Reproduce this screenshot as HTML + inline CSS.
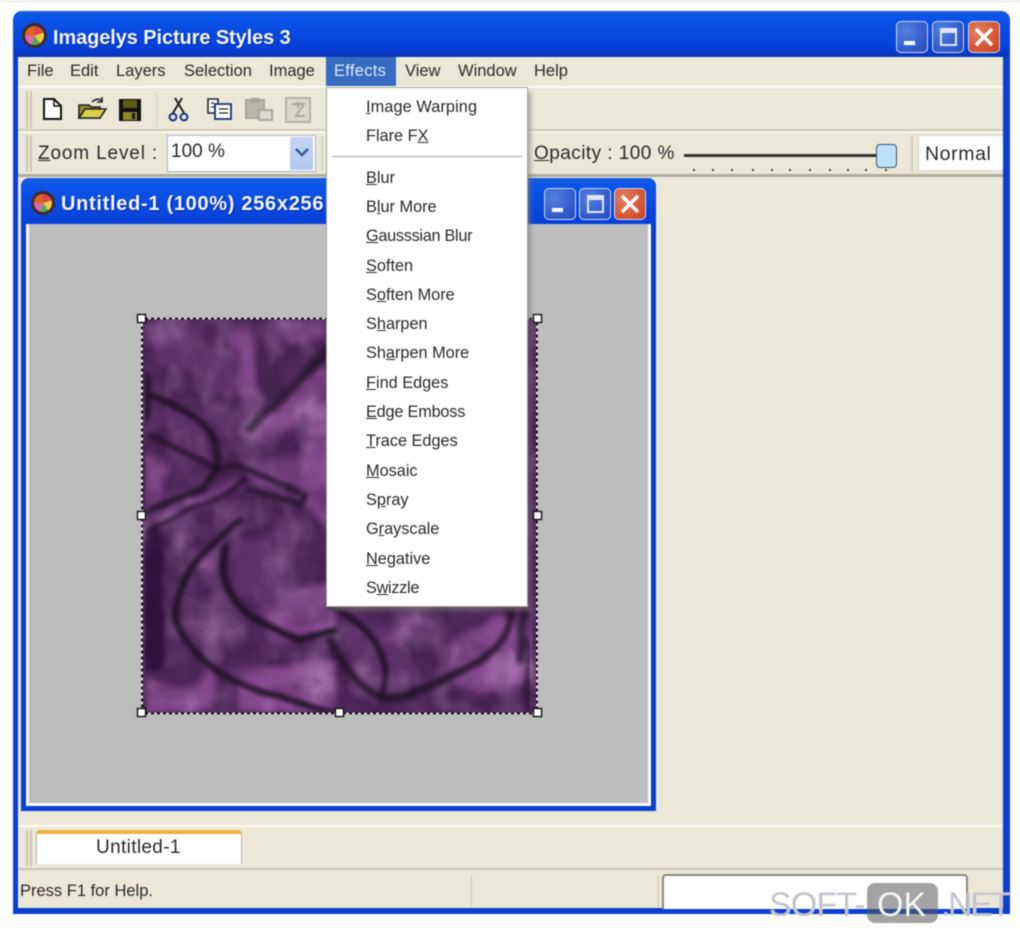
<!DOCTYPE html>
<html><head><meta charset="utf-8"><title>Imagelys Picture Styles 3</title>
<style>
html,body{margin:0;padding:0;background:#fff}
#p{position:relative;width:1020px;height:929px;overflow:hidden;background:#fdfdfb;font-family:"Liberation Sans",sans-serif;color:#2a2a2a;filter:blur(.45px)}
#p div,#p span.t{position:absolute}
.t{white-space:nowrap;font-size:16.5px;line-height:20px}
.b{box-sizing:border-box}
.tb{font-weight:bold;color:#f2f6ff;font-size:20px;line-height:24px;text-shadow:1px 1px 1px #0a2a9a}
.btn{box-sizing:border-box;width:32px;height:32px;border:1px solid #cfdcf8;border-radius:5px;background:radial-gradient(circle at 30% 30%,#5480e0,#2c55c8 75%,#2a4cb0)}
.red{background:radial-gradient(circle at 30% 30%,#e08060,#d5512e 70%,#c0421f)}
.ico{box-sizing:border-box;border-radius:50%;background:conic-gradient(#d44 0 20%,#ec4 20% 40%,#5a5 40% 55%,#d6a 55% 75%,#d62 75% 100%);border:3px solid #3a2a30}
.m{font-size:16.3px;line-height:20px;left:366px;white-space:nowrap}
</style></head><body><div id="p">

<div style="left:0;top:0;width:1020px;height:2px;background:#eee"></div>
<div class="b" style="left:13px;top:11px;width:997px;height:903px;border-radius:9px 9px 0 0;background:#0a3fd0"></div>
<div style="left:13px;top:11px;width:997px;height:46px;border-radius:9px 9px 0 0;background:linear-gradient(#1a5ce0 0,#0a55e8 12%,#0a4ae0 45%,#0540d8 80%,#0a36b8 100%)"></div>
<div style="left:18px;top:57px;width:985px;height:851px;background:#ebe8d8"></div>

<div class="ico" style="left:22px;top:23px;width:25px;height:25px"></div>
<span class="t tb" style="left:53px;top:26px;letter-spacing:-.1px">Imagelys Picture Styles 3</span>
<div class="btn" style="left:896px;top:21px"><div style="left:7px;top:19px;width:11px;height:4px;background:#fff"></div></div>
<div class="btn" style="left:932px;top:21px"><div class="b" style="left:7px;top:6px;width:17px;height:18px;border:2px solid #dfe8fb;border-top-width:5px"></div></div>
<div class="btn red" style="left:968px;top:21px"><svg style="position:absolute;left:5px;top:5px" width="20" height="20"><path d="M2 2L18 18M18 2L2 18" stroke="#fff" stroke-width="3.4"/></svg></div>

<!-- menu bar -->
<span class="t" style="left:27px;top:61px">File</span>
<span class="t" style="left:70px;top:61px">Edit</span>
<span class="t" style="left:116px;top:61px">Layers</span>
<span class="t" style="left:184px;top:61px">Selection</span>
<span class="t" style="left:269px;top:61px">Image</span>
<div style="left:326px;top:57px;width:70px;height:30px;background:#356bc0"></div>
<span class="t" style="left:334px;top:61px;color:#dfe9f8;letter-spacing:.3px">Effects</span>
<span class="t" style="left:405px;top:61px">View</span>
<span class="t" style="left:458px;top:61px">Window</span>
<span class="t" style="left:534px;top:61px">Help</span>
<div style="left:18px;top:86px;width:985px;height:2px;background:#fbfaf3"></div>

<!-- toolbars -->
<div style="left:18px;top:129px;width:985px;height:2px;background:#cfccba"></div>
<div style="left:18px;top:131px;width:985px;height:2px;background:#f9f8ef"></div>
<div style="left:18px;top:174px;width:985px;height:3px;background:#b0ad9c"></div>
<div style="left:26px;top:91px;width:2px;height:37px;background:#c9c6b4"></div>
<div style="left:30px;top:91px;width:2px;height:37px;background:#c9c6b4"></div>
<div style="left:26px;top:135px;width:2px;height:37px;background:#c9c6b4"></div>
<div style="left:30px;top:135px;width:2px;height:37px;background:#c9c6b4"></div>
<div style="left:156px;top:93px;width:1px;height:34px;background:#cfccba"></div>
<div style="left:321px;top:137px;width:2px;height:34px;background:#d5d2c0"></div>
<div style="left:911px;top:136px;width:2px;height:36px;background:#d5d2c0"></div>

<svg style="position:absolute;left:40px;top:94px" width="290" height="30">
<path d="M4 5H14L21 12V25H4Z" fill="#fff" stroke="#111" stroke-width="2"/><path d="M14 5V12H21" fill="none" stroke="#111" stroke-width="1.5"/>
<path d="M39 24L39 11H49L51 13H60V24Z" fill="#8d8a2a" stroke="#222" stroke-width="1.6"/><path d="M39 24L45 15H66L60 24Z" fill="#d8ce50" stroke="#222" stroke-width="1.6"/><path d="M52 8Q58 3 62 7M62 3V8H57" fill="none" stroke="#222" stroke-width="1.6"/>
<rect x="79" y="5" width="22" height="22" fill="#111"/><rect x="83" y="6" width="14" height="8" fill="#5b5b18"/><rect x="83" y="18" width="14" height="8" fill="#8a8a2a"/><rect x="92" y="19" width="3" height="6" fill="#111"/>
<path d="M135 4L144 19M142 4L133 19" stroke="#222" stroke-width="2" fill="none"/><circle cx="133" cy="23" r="3.4" fill="none" stroke="#1a2a8a" stroke-width="2"/><circle cx="144" cy="23" r="3.4" fill="none" stroke="#1a2a8a" stroke-width="2"/>
<path d="M168 5H178V19H168Z" fill="#fff" stroke="#223" stroke-width="1.6"/><path d="M175 10H191V25H175Z" fill="#fff" stroke="#1a2a7a" stroke-width="1.8"/><path d="M179 15H188M179 19H188M171 9H174M171 13H174" stroke="#223" stroke-width="1.2"/>
<path d="M206 6H224V24H206Z" fill="#b8b6a8" stroke="#a8a698" stroke-width="2"/><rect x="211" y="4" width="9" height="5" fill="#a8a698"/><rect x="219" y="16" width="13" height="10" fill="#dedbcc" stroke="#a8a698" stroke-width="2"/>
<rect x="246" y="4" width="24" height="24" fill="#dcd9c8" stroke="#b5b3a3" stroke-width="2"/><path d="M252 10H264L256 22H265M258 8V14" stroke="#aaa898" stroke-width="2" fill="none"/>
</svg>

<span class="t" style="left:38px;top:144px;font-size:19px;letter-spacing:.85px"><u>Z</u>oom Level :</span>
<div class="b" style="left:167px;top:135px;width:149px;height:37px;background:#fff;border:1px solid #a8b4c8"></div>
<span class="t" style="left:171px;top:142px;font-size:19px">100 %</span>
<div style="left:290px;top:137px;width:23px;height:33px;border-radius:2px;background:linear-gradient(#c6d6f2,#b2c8ee)"></div>
<svg style="position:absolute;left:294px;top:147px" width="16" height="12"><path d="M2 2L8 8L14 2" fill="none" stroke="#3a5a9a" stroke-width="2.6"/></svg>

<span class="t" style="left:534px;top:144px;font-size:19px;letter-spacing:.45px"><u>O</u>pacity : 100 %</span>
<div style="left:684px;top:154px;width:200px;height:3px;background:#333"></div>
<div class="b" style="left:876px;top:144px;width:21px;height:24px;background:#bfe0f6;border:1.5px solid #2a5570;border-radius:4px"></div>
<svg style="position:absolute;left:690px;top:168px" width="200" height="5"><path d="M3 2h2M22 2h2M41 2h2M62 2h2M81 2h2M99 2h2M119 2h2M139 2h2M157 2h2M175 2h2M195 2h2" stroke="#444" stroke-width="2"/></svg>
<div class="b" style="left:918px;top:135px;width:85px;height:36px;background:#fff;border:1px solid #d8d6c8;border-right:0"></div>
<span class="t" style="left:925px;top:144px;font-size:19.5px;letter-spacing:.6px">Normal</span>

<!-- child window -->
<div style="left:21px;top:178px;width:635px;height:633px;border-radius:8px 8px 0 0;background:#0a3fd0"></div>
<div style="left:21px;top:178px;width:635px;height:46px;border-radius:8px 8px 0 0;background:linear-gradient(#1a5ce0,#0a55e8 15%,#0a4ae0 60%,#0540d8)"></div>
<div style="left:26px;top:224px;width:625px;height:582px;background:#fbfbf8"></div>
<div style="left:29px;top:224px;width:619px;height:579px;background:#bdbdbd"></div>
<div class="ico" style="left:31px;top:191px;width:24px;height:24px"></div>
<span class="t tb" style="left:61px;top:192px;letter-spacing:.7px">Untitled-1 (100%) 256x256</span>
<div class="btn" style="left:544px;top:188px"><div style="left:7px;top:19px;width:11px;height:4px;background:#fff"></div></div>
<div class="btn" style="left:579px;top:188px"><div class="b" style="left:7px;top:6px;width:17px;height:18px;border:2px solid #dfe8fb;border-top-width:5px"></div></div>
<div class="btn red" style="left:614px;top:188px"><svg style="position:absolute;left:5px;top:5px" width="20" height="20"><path d="M2 2L18 18M18 2L2 18" stroke="#fff" stroke-width="3.4"/></svg></div>

<!-- texture -->
<svg style="position:absolute;left:0;top:0" width="1020" height="929">
<defs>
<filter id="f" x="0" y="0" width="100%" height="100%"><feTurbulence type="fractalNoise" baseFrequency=".03" numOctaves="2" seed="7"/><feDisplacementMap in="SourceGraphic" scale="12"/><feGaussianBlur stdDeviation="3.5"/></filter>
<filter id="g" x="0" y="0" width="100%" height="100%"><feTurbulence type="fractalNoise" baseFrequency=".03" numOctaves="2" seed="3"/><feDisplacementMap in="SourceGraphic" scale="6"/><feGaussianBlur stdDeviation="2"/></filter>
<filter id="n" x="0" y="0" width="100%" height="100%"><feTurbulence type="fractalNoise" baseFrequency=".025 .035" numOctaves="4" seed="11"/><feColorMatrix values="0 0 0 0 .1  0 0 0 0 .03  0 0 0 0 .13  2.6 0 0 0 -1.05"/><feGaussianBlur stdDeviation="1.2"/></filter>
<filter id="l" x="0" y="0" width="100%" height="100%"><feTurbulence type="fractalNoise" baseFrequency=".03 .02" numOctaves="3" seed="23"/><feColorMatrix values="0 0 0 0 .56  0 0 0 0 .32  0 0 0 0 .6  2.4 0 0 0 -1.05"/><feGaussianBlur stdDeviation="1.5"/></filter>
<clipPath id="c"><rect x="142" y="318" width="395" height="395"/></clipPath>
</defs>
<g clip-path="url(#c)"><rect x="142" y="318" width="395" height="395" fill="#472350"/>
<g filter="url(#f)">
<g fill="#864c8e">
<path d="M227 333L250 325L258 400L240 395Z"/><path d="M280 322L323 318L323 335L290 345Z"/>
<path d="M240 435L323 362L330 395L262 445Z"/><path d="M250 465L303 455L305 488L250 488Z" fill="#6e3d78"/>
<path d="M307 405L335 400L335 535L300 500Z"/><path d="M145 455L172 465L160 505L145 505Z"/>
<path d="M150 516L237 476L240 486L160 525Z" fill="#6e3d78"/>
<path d="M263 612L300 590L335 590L335 632L270 640Z"/>
<path d="M232 670L335 660L335 712L240 712Z"/><path d="M145 675L178 690L215 670L210 712L145 712Z"/>
<path d="M450 640L500 615L533 625L533 680L480 695L450 680Z"/>
</g>
<g fill="#5d3166">
<path d="M150 328L205 325L200 375L155 365Z"/><path d="M230 540L290 530L292 605L235 600Z"/>
<path d="M195 565L225 535L215 575Z" fill="#7b4784"/><path d="M185 610L215 640L225 660L195 640Z"/>
<path d="M160 405L205 415L210 465L170 440Z"/><path d="M345 625L395 620L420 680L355 700Z"/><path d="M380 640L420 612L425 625L395 640Z" fill="#7b4784"/>
<path d="M205 345L240 345L240 395L210 395Z"/>
</g>
</g>
<rect x="142" y="318" width="395" height="395" filter="url(#l)" opacity=".5"/>
<rect x="142" y="318" width="395" height="395" filter="url(#n)" opacity=".75"/>
<g filter="url(#g)" fill="none" stroke="#1e0a24" stroke-linecap="round">
<path d="M145 395Q200 410 215 440Q222 470 200 490L150 510" stroke-width="5"/>
<path d="M150 435L220 470L235 465L250 470L305 495L300 505L250 490" stroke-width="4"/>
<path d="M148 530L235 490L245 480" stroke-width="3"/>
<path d="M240 520Q180 560 175 620Q200 680 290 700L335 712" stroke-width="5"/>
<path d="M225 545Q215 590 255 620L300 640L335 630" stroke-width="6"/>
<path d="M250 430L330 350" stroke-width="9" opacity=".7"/><path d="M145 380L145 420" stroke-width="10"/>
<path d="M330 640Q370 720 420 690Q520 650 510 610" stroke-width="7" opacity=".85"/>
<path d="M330 606Q400 640 380 700" stroke-width="5"/><path d="M152 540V660" stroke-width="24" opacity=".55"/>
<path d="M528 320V440" stroke-width="9" opacity=".9"/><path d="M530 460V600" stroke-width="9" opacity=".7"/><path d="M530 640V712" stroke-width="8" opacity=".7"/>
<path d="M525 610L520 660" stroke-width="8" opacity=".7"/>
</g></g>
<rect x="142" y="318.5" width="395" height="395" fill="none" stroke="#000" stroke-width="1.6"/>
<rect x="142" y="318.5" width="395" height="395" fill="none" stroke="#fff" stroke-width="1.6" stroke-dasharray="3 3"/>
<g fill="#fff" stroke="#111" stroke-width="1.4">
<rect x="137.5" y="314.5" width="8" height="8"/><rect x="533.5" y="314.5" width="8" height="8"/>
<rect x="137.5" y="511.5" width="8" height="8"/><rect x="533.5" y="511.5" width="8" height="8"/>
<rect x="137.5" y="708.5" width="8" height="8"/><rect x="335.5" y="708.5" width="8" height="8"/><rect x="533.5" y="708.5" width="8" height="8"/>
</g></svg>

<!-- dropdown -->
<div style="left:331px;top:92px;width:200px;height:519px;background:#777;opacity:.55;filter:blur(2px)"></div>
<div class="b" style="left:326px;top:87px;width:202px;height:520px;background:#fff;border:1px solid #a5a294"></div>
<div style="left:332px;top:156px;width:190px;height:1px;background:#a0a09a"></div>
<span class="t m" style="top:97px;letter-spacing:.1px"><u>I</u>mage Warping</span>
<span class="t m" style="top:126px">Flare F<u>X</u></span>
<span class="t m" style="top:168px"><u>B</u>lur</span>
<span class="t m" style="top:197px">B<u>l</u>ur More</span>
<span class="t m" style="top:226px;letter-spacing:-.3px"><u>G</u>ausssian Blur</span>
<span class="t m" style="top:256px"><u>S</u>often</span>
<span class="t m" style="top:285px">S<u>o</u>ften More</span>
<span class="t m" style="top:314px">S<u>h</u>arpen</span>
<span class="t m" style="top:343px">Sh<u>a</u>rpen More</span>
<span class="t m" style="top:373px"><u>F</u>ind Edges</span>
<span class="t m" style="top:402px;letter-spacing:-.2px"><u>E</u>dge Emboss</span>
<span class="t m" style="top:431px"><u>T</u>race Edges</span>
<span class="t m" style="top:461px"><u>M</u>osaic</span>
<span class="t m" style="top:490px">S<u>p</u>ray</span>
<span class="t m" style="top:519px">G<u>r</u>ayscale</span>
<span class="t m" style="top:549px"><u>N</u>egative</span>
<span class="t m" style="top:578px;letter-spacing:-.3px">S<u>w</u>izzle</span>

<!-- bottom bars -->
<div style="left:18px;top:825px;width:985px;height:2px;background:#fbfaf3"></div>
<div style="left:18px;top:868px;width:985px;height:2px;background:#c8c5b4"></div>
<div style="left:26px;top:830px;width:2px;height:36px;background:#c9c6b4"></div>
<div style="left:30px;top:830px;width:2px;height:36px;background:#c9c6b4"></div>
<div class="b" style="left:36px;top:830px;width:206px;height:34px;background:#fff;border:1px solid #b5b3a3;border-bottom:0;border-radius:4px 4px 0 0;border-top:4px solid #f0b040"></div>
<span class="t" style="left:96px;top:838px;font-size:19px;letter-spacing:.35px">Untitled-1</span>
<span class="t" style="left:20px;top:881px;font-size:16.5px">Press F1 for Help.</span>
<div style="left:471px;top:875px;width:1px;height:32px;background:#cfccba"></div>
<div style="left:658px;top:875px;width:1px;height:32px;background:#cfccba"></div>
<div class="b" style="left:662px;top:874px;width:306px;height:35px;background:#fff;border:2px solid #8a887a;border-bottom:0;border-radius:4px 4px 0 0"></div>

<!-- watermark -->
<div style="left:867px;top:883px;width:71px;height:40px;border-radius:8px;background:rgba(90,90,90,.55)"></div>
<span class="t" style="left:769px;top:885px;font-size:34px;line-height:40px;color:rgba(190,190,200,.9);letter-spacing:-.9px;text-shadow:0 0 1px #fff">SOFT-</span>
<span class="t" style="left:877px;top:885px;font-size:34px;line-height:40px;color:#f4f4f4">OK</span>
<span class="t" style="left:941px;top:885px;font-size:34px;line-height:40px;color:rgba(190,190,200,.9);letter-spacing:-2.4px;text-shadow:0 0 1px #fff">.NET</span>
</div></body></html>
